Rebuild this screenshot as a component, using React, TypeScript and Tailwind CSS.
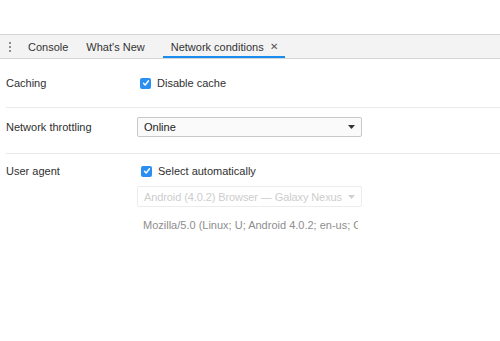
import React from 'react';

const font = { fontFamily: '"Liberation Sans", Arial, sans-serif' };

function Check() {
  return (
    <span className="w-[11px] h-[11px] rounded-[2px] bg-[#2b8ff1] flex items-center justify-center shrink-0">
      <svg width="8" height="8" viewBox="0 0 8 8">
        <path d="M1.5 4.2 L3.2 6 L6.5 1.8" fill="none" stroke="white" strokeWidth="1.4" strokeLinecap="round" strokeLinejoin="round" />
      </svg>
    </span>
  );
}

function Caret({ color }: { color: string }) {
  return (
    <svg width="7" height="4" viewBox="0 0 7 4" className="shrink-0">
      <path d="M0 0 L7 0 L3.5 4 Z" fill={color} />
    </svg>
  );
}

export default function App() {
  const tabs = [
    { id: 'console', label: 'Console' },
    { id: 'new', label: "What's New" },
  ];

  return (
    <div className="w-[500px] h-[341px] bg-white overflow-hidden text-[11px] leading-[14px] text-[#303030]" style={font}>
      <div className="h-[34px]" />

      {/* Drawer tab strip */}
      <div className="h-[25px] bg-[#f3f3f3] border-t border-b border-[#d6d6d6] flex items-stretch">
        <div className="w-[19px] flex flex-col items-center justify-center gap-[2px] pl-[1px]">
          <span className="w-[2px] h-[2px] rounded-full bg-[#6e6e6e]" />
          <span className="w-[2px] h-[2px] rounded-full bg-[#6e6e6e]" />
          <span className="w-[2px] h-[2px] rounded-full bg-[#6e6e6e]" />
        </div>
        {tabs.map((t) => (
          <div key={t.id} className="flex items-center px-[9px] text-[#333]">
            {t.label}
          </div>
        ))}
        <div className="ml-[9px] flex items-center gap-[6px] pl-[8px] pr-[7px] border-b-2 border-[#1a8cf0] text-[#333] pt-[2px]">
          <span>Network conditions</span>
          <span className="text-[10px] text-[#555]">✕</span>
        </div>
      </div>

      {/* Settings */}
      <div className="pl-[6px]">
        <div className="flex items-center h-[49px] border-b border-[#eaeaea]">
          <div className="w-[134px]">Caching</div>
          <label className="flex items-center gap-[6px]">
            <Check />
            <span>Disable cache</span>
          </label>
        </div>

        <div className="h-[46px] pt-[9px] border-b border-[#eaeaea]">
          <div className="flex items-center">
            <div className="w-[131px]">Network throttling</div>
            <div className="w-[225px] h-[20px] border border-[#c8c8c8] rounded-[2px] bg-[#fafafa] flex items-center justify-between px-[6px]">
              <span className="text-[#222]">Online</span>
              <Caret color="#333" />
            </div>
          </div>
        </div>

        <div className="flex pt-[10px]">
          <div className="w-[131px]">User agent</div>
          <div className="flex flex-col">
            <label className="flex items-center gap-[6px] pl-[4px] h-[14px]">
              <Check />
              <span>Select automatically</span>
            </label>
            <div className="mt-[8px] w-[225px] h-[21px] border border-[#ececec] rounded-[2px] flex items-center justify-between gap-[6px] px-[6px]">
              <span className="text-[#cdcdcd] whitespace-nowrap overflow-hidden tracking-[-0.1px]">Android (4.0.2) Browser — Galaxy Nexus</span>
              <Caret color="#d0d0d0" />
            </div>
            <div className="mt-[11px] w-[221px] px-[6px] overflow-hidden whitespace-nowrap text-[#8e8e8e]">
              Mozilla/5.0 (Linux; U; Android 4.0.2; en-us; Galaxy Nexus Build/ICL53F)
            </div>
          </div>
        </div>
      </div>
    </div>
  );
}
